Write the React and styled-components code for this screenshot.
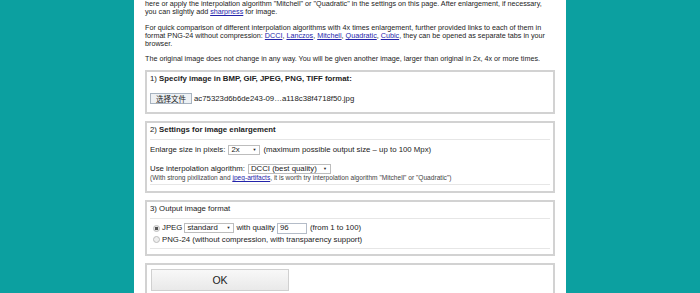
import React from "react";
import styled, { createGlobalStyle } from "styled-components";

const Global = createGlobalStyle`
  html, body { margin: 0; padding: 0; background: #0ca0a0; }
  body { font-family: "Liberation Sans", Arial, sans-serif; color: #222; }
`;

const Page = styled.div`
  width: 700px;
  height: 293px;
  overflow: hidden;
  background: #0ca0a0;
  display: flex;
  justify-content: center;
`;

const Panel = styled.main`
  width: 432px;
  background: #fff;
  padding: 0 11px 0;
  box-sizing: border-box;
  font-size: 7.8px;
  line-height: 8px;
  display: flex;
  flex-direction: column;
`;

const Para = styled.p`
  margin: 0 0 ${(p) => p.$gap ?? 7}px;
  font-size: 7.2px;
  line-height: 8.3px;
`;

const Link = styled.a`
  color: #2424aa;
  text-decoration: underline;
`;

const Box = styled.section`
  border: 2px solid #d2d2d2;
  padding: ${(p) => p.$pad || "3px 2px 0"};
  margin-bottom: 7px;
  box-sizing: border-box;
  flex-shrink: 0;
`;

const Title = styled.div`
  padding-left: 1px;
  height: 8px;
  b { font-weight: bold; }
`;

const Sep = styled.hr`
  border: 0;
  border-top: 1px solid #e6e6e6;
  margin: ${(p) => p.$m || "0"};
`;

const Row = styled.div`
  display: flex;
  align-items: center;
  gap: ${(p) => p.$gap ?? 3}px;
  padding-left: ${(p) => p.$indent ?? 1}px;
  height: ${(p) => p.$h ?? 11}px;
  margin-top: ${(p) => p.$mt ?? 0}px;
  white-space: nowrap;
`;

const FileButton = styled.span`
  display: inline-flex;
  align-items: center;
  justify-content: center;
  width: 42px;
  height: 11px;
  box-sizing: border-box;
  border: 1px solid #a7b3c0;
  background: #eef1f4;
  font-family: "Noto Sans CJK SC", "Liberation Sans", sans-serif;
  font-size: 7.5px;
  color: #222;
`;

const Select = styled.span`
  display: inline-flex;
  align-items: center;
  justify-content: space-between;
  width: ${(p) => p.$w}px;
  height: ${(p) => p.$h ?? 10}px;
  box-sizing: border-box;
  border: 1px solid #bdbdbd;
  background: #fff;
  padding: 0 3px 0 2px;
  font-size: 7.8px;
  &::after {
    content: "▼";
    font-size: 4px;
    color: #222;
  }
`;

const Note = styled.div`
  font-size: 6.6px;
  line-height: 7.6px;
  padding-left: 1px;
  color: #444;
`;

const Radio = styled.span`
  width: 7px;
  height: 7px;
  border-radius: 50%;
  border: 1px solid #bcbcbc;
  box-sizing: border-box;
  background: ${(p) => (p.$checked ? "radial-gradient(circle, #555 0 1.5px, #e8e8e8 2px)" : "#eee")};
  flex-shrink: 0;
`;

const TextInput = styled.span`
  display: inline-flex;
  align-items: center;
  width: 30px;
  height: 11px;
  box-sizing: border-box;
  border: 1px solid #b4bcc8;
  padding-left: 2px;
`;

const Hint = styled.span`
  margin-left: ${(p) => p.$ml ?? 0}px;
`;

const OkButton = styled.button`
  width: 138px;
  height: 22px;
  border: 1px solid #d0d0d0;
  background: linear-gradient(#f8f8f8, #e9e9e9);
  font-family: "Liberation Sans", Arial, sans-serif;
  font-size: 10.5px;
  color: #222;
  padding: 0;
  margin-left: 2px;
`;

export default function App() {
  return (
    <Page>
      <Global />
      <Panel>
        <Para>
          here or apply the interpolation algorithm "Mitchell" or "Quadratic" in the settings on this page. After enlargement, if necessary,
          you can slightly add <Link href="#">sharpness</Link> for image.
        </Para>
        <Para>
          For quick comparison of different interpolation algorithms with 4x times enlargement, further provided links to each of them in
          format PNG-24 without compression: <Link href="#">DCCI</Link>, <Link href="#">Lanczos</Link>, <Link href="#">Mitchell</Link>,{" "}
          <Link href="#">Quadratic</Link>, <Link href="#">Cubic</Link>, they can be opened as separate tabs in your browser.
        </Para>
        <Para $gap={6.5}>
          The original image does not change in any way. You will be given another image, larger than original in 2x, 4x or more times.
        </Para>

        <Box style={{ height: 44 }}>
          <Title>
            1) <b>Specify image in BMP, GIF, JPEG, PNG, TIFF format:</b>
          </Title>
          <Row $mt={10} $gap={2}>
            <FileButton>选择文件</FileButton>
            <span>ac75323d6b6de243-09…a118c38f4718f50.jpg</span>
          </Row>
        </Box>

        <Box>
          <Title>
            2) <b>Settings for image enlargement</b>
          </Title>
          <Sep $m="5px 1px 0" />
          <Row $mt={5} $h={10}>
            <span>Enlarge size in pixels:</span>
            <Select $w={32}>2x</Select>
            <span>(maximum possible output size – up to 100 Mpx)</span>
          </Row>
          <Row $mt={9} $h={10}>
            <span>Use interpolation algorithm:</span>
            <Select $w={83}>DCCI (best quality)</Select>
          </Row>
          <Note>
            (With strong pixilization and <Link href="#">jpeg-artifacts</Link>, it is worth try interpolation algorithm "Mitchell" or "Quadratic")
          </Note>
          <Sep $m="2.5px 1px 5.5px" />
        </Box>

        <Box>
          <Title>3) Output image format</Title>
          <Sep $m="5px 1px 0" />
          <Row $mt={4} $indent={4} $gap={2}>
            <Radio $checked />
            <span>JPEG</span>
            <Select $w={50} $h={10}>standard</Select>
            <span>with quality</span>
            <TextInput>96</TextInput>
            <Hint $ml={1}>(from 1 to 100)</Hint>
          </Row>
          <Row $mt={1} $indent={4} $h={10} $gap={2}>
            <Radio />
            <span>PNG-24 (without compression, with transparency support)</span>
          </Row>
          <Sep $m="3px 1px 5px" />
        </Box>

        <Box $pad="4px 2px 10px">
          <OkButton>OK</OkButton>
        </Box>
      </Panel>
    </Page>
  );
}
